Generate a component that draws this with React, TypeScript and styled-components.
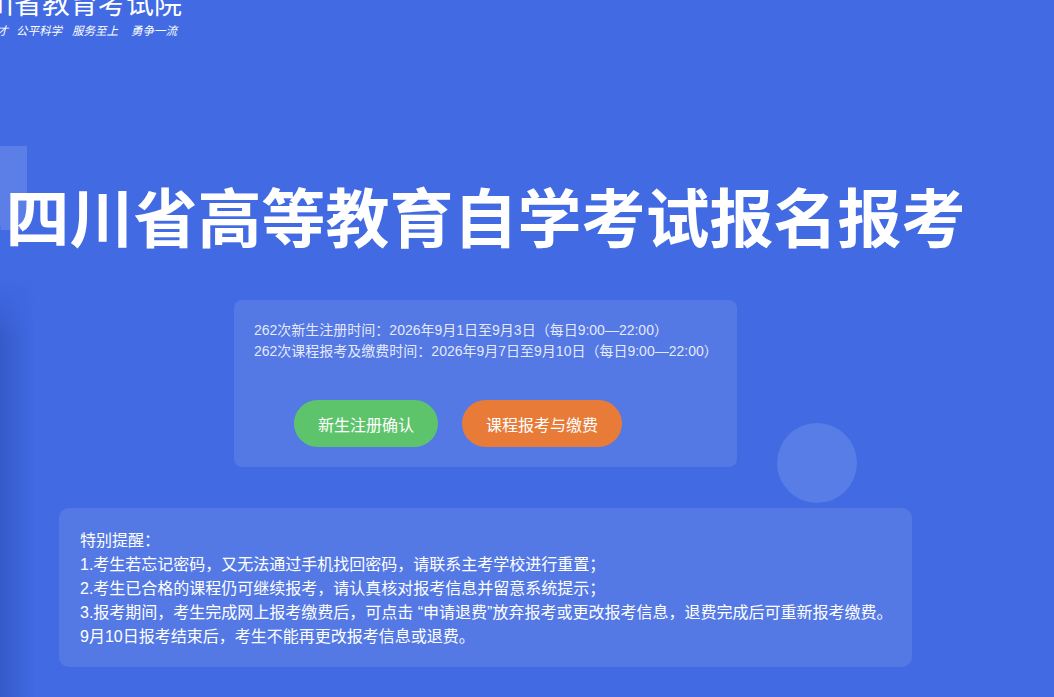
import styled, { createGlobalStyle } from "styled-components";

const GlobalStyle = createGlobalStyle`
  html, body {
    margin: 0;
    padding: 0;
    background: #416ae3;
    overflow: hidden;
  }
  body {
    font-family: "Liberation Sans", "Noto Sans CJK SC", sans-serif;
    color: #ffffff;
  }
`;

const Page = styled.div`
  position: relative;
  width: 1054px;
  height: 697px;
  overflow: hidden;
  background: #416ae3;
`;

const EdgeShade = styled.div`
  position: absolute;
  left: 0;
  top: 280px;
  bottom: 0;
  width: 34px;
  background: linear-gradient(to right, rgba(40, 70, 170, 0.45), rgba(65, 106, 227, 0));
  -webkit-mask-image: linear-gradient(to bottom, transparent, #000 60px);
  mask-image: linear-gradient(to bottom, transparent, #000 60px);
  pointer-events: none;
`;

const Square = styled.div`
  position: absolute;
  left: -60px;
  top: 146px;
  width: 87px;
  height: 84px;
  background: rgba(255, 255, 255, 0.14);
  clip-path: polygon(0 0, 100% 0, 100% 100%, 70% 100%, 62% 50%);
  pointer-events: none;
`;

const Bubble = styled.div`
  position: absolute;
  left: 777px;
  top: 423px;
  width: 80px;
  height: 80px;
  border-radius: 50%;
  background: rgba(255, 255, 255, 0.13);
  pointer-events: none;
`;

const Header = styled.header`
  display: flex;
  flex-direction: column;
  margin-left: -42px;
  margin-top: -12px;
`;

const LogoName = styled.div`
  font-family: "Noto Sans CJK SC", sans-serif;
  font-size: 28px;
  line-height: 28px;
  font-weight: 400;
`;

const Slogan = styled.div`
  display: flex;
  margin-top: 8px;
  margin-left: 4px;
  font-family: "Noto Sans CJK SC", sans-serif;
  font-size: 11.5px;
  line-height: 13px;
  font-style: italic;
`;

const SloganPart = styled.span<{ $gap: number }>`
  margin-left: ${(p) => p.$gap}px;
  white-space: nowrap;
`;

const Main = styled.main`
  width: 971px;
  display: flex;
  flex-direction: column;
  align-items: center;
`;

const Title = styled.h1`
  margin: 145px 0 0;
  font-family: "Noto Sans CJK SC", sans-serif;
  font-size: 64px;
  line-height: 64px;
  font-weight: 700;
  white-space: nowrap;
`;

const InfoCard = styled.section`
  margin-top: 54px;
  width: 503px;
  box-sizing: border-box;
  padding: 20px;
  border-radius: 8px;
  background: rgba(255, 255, 255, 0.1);
`;

const InfoLine = styled.div`
  font-size: 14px;
  line-height: 21px;
  color: rgba(255, 255, 255, 0.86);
  white-space: nowrap;
`;

const Actions = styled.div`
  display: flex;
  gap: 24px;
  margin-top: 38px;
  padding-left: 40px;
`;

const ActionButton = styled.button<{ $color: string; $width: number }>`
  width: ${(p) => p.$width}px;
  height: 47px;
  padding: 0;
  border: none;
  border-radius: 24px;
  background: ${(p) => p.$color};
  color: #ffffff;
  font-family: "Noto Sans CJK SC", sans-serif;
  font-size: 16px;
  cursor: pointer;
`;

const Notice = styled.section`
  margin-top: 41px;
  width: 853px;
  height: 159px;
  box-sizing: border-box;
  padding: 21px 21px 17px;
  border-radius: 10px;
  background: rgba(255, 255, 255, 0.1);
`;

const NoticeLine = styled.div`
  font-size: 16px;
  line-height: 24px;
  color: #ffffff;
  white-space: nowrap;
`;

const slogan = ["为国选才", "公平科学", "服务至上", "勇争一流"];
const sloganGaps = [0, 8, 10, 13];

const notices = [
  "特别提醒：",
  "1.考生若忘记密码，又无法通过手机找回密码，请联系主考学校进行重置；",
  "2.考生已合格的课程仍可继续报考，请认真核对报考信息并留意系统提示；",
  "3.报考期间，考生完成网上报考缴费后，可点击 “申请退费”放弃报考或更改报考信息，退费完成后可重新报考缴费。",
  "9月10日报考结束后，考生不能再更改报考信息或退费。",
];

export default function App() {
  return (
    <>
      <GlobalStyle />
      <Page>
        <Square />
        <EdgeShade />
        <Bubble />
        <Header>
          <LogoName>四川省教育考试院</LogoName>
          <Slogan>
            {slogan.map((part, i) => (
              <SloganPart key={part} $gap={sloganGaps[i]}>
                {part}
              </SloganPart>
            ))}
          </Slogan>
        </Header>
        <Main>
          <Title>四川省高等教育自学考试报名报考</Title>
          <InfoCard>
            <InfoLine>262次新生注册时间：2026年9月1日至9月3日（每日9:00—22:00）</InfoLine>
            <InfoLine>262次课程报考及缴费时间：2026年9月7日至9月10日（每日9:00—22:00）</InfoLine>
            <Actions>
              <ActionButton $color="#5ec46b" $width={144}>新生注册确认</ActionButton>
              <ActionButton $color="#e97b38" $width={160}>课程报考与缴费</ActionButton>
            </Actions>
          </InfoCard>
          <Notice>
            {notices.map((line, i) => (
              <NoticeLine key={i}>{line}</NoticeLine>
            ))}
          </Notice>
        </Main>
      </Page>
    </>
  );
}
